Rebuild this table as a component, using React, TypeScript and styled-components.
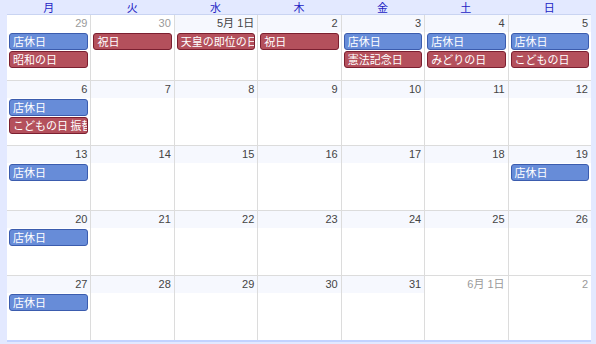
import styled, { createGlobalStyle } from "styled-components";

const GlobalStyle = createGlobalStyle`
  html, body {
    margin: 0;
    padding: 0;
    background: #e3e9ff;
  }
  body {
    font-family: "Liberation Sans", "Noto Sans CJK JP", sans-serif;
  }
`;

type Ev = { label: string; kind: "shop" | "holiday" };
type Day = { label: string; other?: boolean; events?: Ev[] };

const shop: Ev = { label: "店休日", kind: "shop" };
const hol = (label: string): Ev => ({ label, kind: "holiday" });

const weeks: Day[][] = [
  [
    { label: "29", other: true, events: [shop, hol("昭和の日")] },
    { label: "30", other: true, events: [hol("祝日")] },
    { label: "5月 1日", events: [hol("天皇の即位の日")] },
    { label: "2", events: [hol("祝日")] },
    { label: "3", events: [shop, hol("憲法記念日")] },
    { label: "4", events: [shop, hol("みどりの日")] },
    { label: "5", events: [shop, hol("こどもの日")] },
  ],
  [
    { label: "6", events: [shop, hol("こどもの日 振替休日")] },
    { label: "7" },
    { label: "8" },
    { label: "9" },
    { label: "10" },
    { label: "11" },
    { label: "12" },
  ],
  [
    { label: "13", events: [shop] },
    { label: "14" },
    { label: "15" },
    { label: "16" },
    { label: "17" },
    { label: "18" },
    { label: "19", events: [shop] },
  ],
  [
    { label: "20", events: [shop] },
    { label: "21" },
    { label: "22" },
    { label: "23" },
    { label: "24" },
    { label: "25" },
    { label: "26" },
  ],
  [
    { label: "27", events: [shop] },
    { label: "28" },
    { label: "29" },
    { label: "30" },
    { label: "31" },
    { label: "6月 1日", other: true },
    { label: "2", other: true },
  ],
];

const dayNames = ["月", "火", "水", "木", "金", "土", "日"];

const Wrapper = styled.div`
  width: 596px;
  height: 344px;
  padding: 0 5px 0 7px;
  box-sizing: border-box;
  background: #e3e9ff;
`;

const HeaderRow = styled.div`
  display: grid;
  grid-template-columns: repeat(7, 1fr);
  height: 14px;
`;

const DayName = styled.div`
  text-align: center;
  font-size: 11px;
  line-height: 14px;
  color: #2424c4;
  font-family: "Noto Sans CJK JP", sans-serif;
`;

const Month = styled.div`
  background: #fff;
  border-top: 1px solid #c9d4f2;
  border-bottom: 2px solid #c3d3ff;
`;

const Week = styled.div`
  display: grid;
  grid-template-columns: repeat(7, 1fr);
  height: 65px;
  & + & {
    border-top: 1px solid #dcdcdc;
    height: 64px;
  }
`;

const Cell = styled.div`
  min-width: 0;
  display: flex;
  flex-direction: column;
  & + & {
    border-left: 1px solid #dcdcdc;
  }
`;

const DayNum = styled.div<{ $other?: boolean }>`
  height: 17px;
  line-height: 17px;
  text-align: right;
  padding-right: 3px;
  font-size: 11px;
  color: ${(p) => (p.$other ? "#9a9a9a" : "#444")};
  background: ${(p) => (p.$other ? "#fff" : "#f6f8fe")};
  font-family: "Liberation Sans", "Noto Sans CJK JP", sans-serif;
`;

const Events = styled.div`
  display: flex;
  flex-direction: column;
  gap: 1px;
  padding: 1px 2px 0 2px;
`;

const Event = styled.div<{ $kind: "shop" | "holiday" }>`
  height: 15px;
  line-height: 15px;
  border-radius: 3px;
  border: 1px solid ${(p) => (p.$kind === "shop" ? "#3b5cae" : "#7b1f30")};
  background: ${(p) => (p.$kind === "shop" ? "#678cd8" : "#b4505c")};
  color: #fff;
  font-size: 11px;
  padding: 0 3px;
  white-space: nowrap;
  overflow: hidden;
  font-family: "Noto Sans CJK JP", sans-serif;
`;

const App = () => {
  return (
    <Wrapper>
      <GlobalStyle />
      <HeaderRow>
        {dayNames.map((d) => (
          <DayName key={d}>{d}</DayName>
        ))}
      </HeaderRow>
      <Month>
        {weeks.map((week, wi) => (
          <Week key={wi}>
            {week.map((day, di) => (
              <Cell key={di}>
                <DayNum $other={day.other}>{day.label}</DayNum>
                <Events>
                  {(day.events || []).map((ev, ei) => (
                    <Event key={ei} $kind={ev.kind}>
                      {ev.label}
                    </Event>
                  ))}
                </Events>
              </Cell>
            ))}
          </Week>
        ))}
      </Month>
    </Wrapper>
  );
};

export default App;
